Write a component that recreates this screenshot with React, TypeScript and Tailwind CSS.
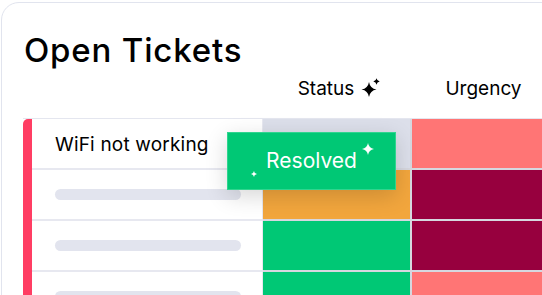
import React from "react";

function star(cx: number, cy: number, r: number) {
  const k = r * 0.14;
  return `M${cx} ${cy - r} Q${cx + k} ${cy - k} ${cx + r} ${cy} Q${cx + k} ${cy + k} ${cx} ${cy + r} Q${cx - k} ${cy + k} ${cx - r} ${cy} Q${cx - k} ${cy - k} ${cx} ${cy - r}Z`;
}

function Sparkle({ className }: { className?: string }) {
  return (
    <svg width="20" height="20" viewBox="0 0 20 20" className={className}>
      <path d={star(8, 11.5, 7.5)} fill="currentColor" />
      <path d={star(15.5, 3.5, 3.2)} fill="currentColor" />
    </svg>
  );
}

const statusCells = ["bg-[#dcdfea]", "bg-[#f2a63d]", "bg-[#00c875]", "bg-[#00c875]"];
const urgencyCells = ["bg-[#ff7575]", "bg-[#97003e]", "bg-[#97003e]", "bg-[#ff7575]"];

export default function App() {
  return (
    <div className="w-[542px] h-[295px] overflow-hidden bg-white font-['Inter',sans-serif] text-black">
      <div className="ml-[1px] mt-[2px] w-[620px] h-[340px] rounded-tl-[18px] border border-[#e1e4ee] bg-white">
        {/* Title */}
        <h1 className="pl-[22px] pt-[31px] text-[33px] leading-[33px] font-medium tracking-[0.025em]">
          Open Tickets
        </h1>

        {/* Column headers */}
        <div className="mt-[10px] flex h-[24px] text-[19px] leading-[24px]">
          <div className="w-[261px] shrink-0" />
          <div className="w-[147px] shrink-0 flex items-center justify-center gap-[7px] pl-[6px]">
            <span>Status</span>
            <Sparkle className="mt-[-2px]" />
          </div>
          <div className="w-[147px] shrink-0 flex items-center justify-center">
            <span>Urgency</span>
          </div>
        </div>

        {/* Table */}
        <div className="relative mt-[17px] ml-[21px] flex border-t border-[#e4e6ef]">
          <div className="w-[9px] shrink-0 rounded-tl-[5px] bg-[#ff3d63]" />

          <div className="w-[231px] shrink-0 flex flex-col gap-[2px] bg-[#e7e8f0] border-r border-[#e7e8f0]">
            <div className="h-[49px] bg-white flex items-center pl-[23px] pt-[4px] text-[19px] tracking-[0.01em]">
              WiFi not working
            </div>
            {[0, 1, 2].map((i) => (
              <div key={i} className="h-[49px] bg-white flex items-center pl-[23px]">
                <div className="w-[186px] h-[11px] rounded-full bg-[#e2e4ee]" />
              </div>
            ))}
          </div>

          <div className="w-[147px] shrink-0 flex flex-col gap-[2px] bg-[#d6d7df]">
            {statusCells.map((c, i) => (
              <div key={i} className={`h-[49px] ${c}`} />
            ))}
          </div>

          <div className="w-[2px] shrink-0 bg-[#d6d7df]" />

          <div className="w-[150px] shrink-0 flex flex-col gap-[2px] bg-[#d6d7df]">
            {urgencyCells.map((c, i) => (
              <div key={i} className={`h-[49px] ${c}`} />
            ))}
          </div>

          {/* Status dropdown chip */}
          <div className="absolute left-[204px] top-[13px] w-[169px] h-[58px] bg-[#00c875] border border-[#2fd58f] shadow-[0_6px_22px_rgba(0,0,0,0.16)] flex items-center justify-center text-white text-[21px]">
            Resolved
            <svg width="14" height="14" viewBox="0 0 14 14" className="absolute left-[133px] top-[9px] text-white">
              <path d={star(7, 7, 6)} fill="currentColor" />
            </svg>
            <svg width="8" height="8" viewBox="0 0 8 8" className="absolute left-[22px] top-[37px] text-white">
              <path d={star(4, 4, 3)} fill="currentColor" />
            </svg>
          </div>
        </div>
      </div>
    </div>
  );
}
